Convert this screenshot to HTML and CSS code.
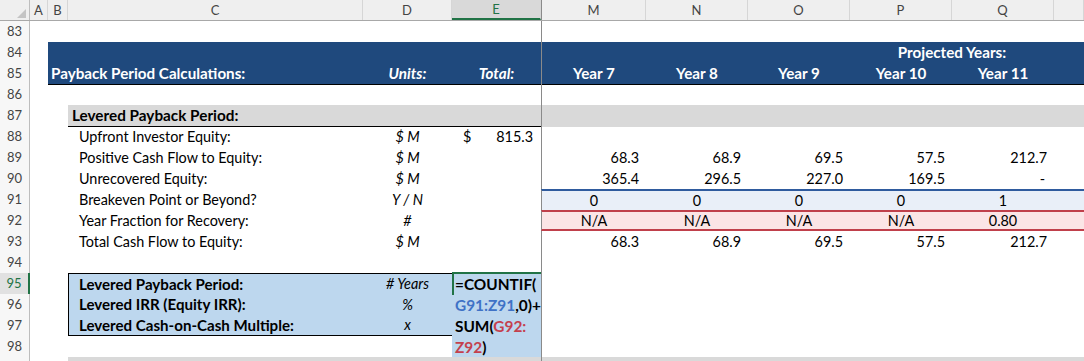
FILE: index.html
```html
<!DOCTYPE html>
<html>
<head>
<meta charset="utf-8">
<link rel="stylesheet" href="styles.css">
</head>
<body>
<div class="sheet">
  <div class="row hdr">
    <div class="ch corner"><span class="tri"></span></div>
    <div class="ch">A</div><div class="ch">B</div><div class="ch">C</div><div class="ch">D</div><div class="ch sel">E</div>
    <div class="ch fz">M</div><div class="ch">N</div><div class="ch">O</div><div class="ch">P</div><div class="ch">Q</div><div class="ch"></div>
  </div>

  <div class="row"><div class="rn">83</div><div class="c sp5"></div><div class="c fz sp6"></div></div>

  <div class="row">
    <div class="rn">84</div><div class="c"></div>
    <div class="c navy sp4"></div>
    <div class="c navy wl fz sp3"></div>
    <div class="c navy wl sp2 hd">Projected Years:</div>
    <div class="c navy wl"></div>
  </div>

  <div class="row">
    <div class="rn">85</div><div class="c"></div>
    <div class="c navy bb sp2 ttl">Payback Period Calculations:</div>
    <div class="c navy bb hd it">Units:</div>
    <div class="c navy bb hd it">Total:</div>
    <div class="c navy bb hd fz">Year 7</div>
    <div class="c navy bb hd">Year 8</div>
    <div class="c navy bb hd">Year 9</div>
    <div class="c navy bb hd">Year 10</div>
    <div class="c navy bb hd">Year 11</div>
    <div class="c navy bb"></div>
  </div>

  <div class="row"><div class="rn">86</div><div class="c sp5"></div><div class="c fz sp6"></div></div>

  <div class="row">
    <div class="rn">87</div><div class="c sp2"></div>
    <div class="c gray bb sec">Levered Payback Period:</div>
    <div class="c gray bb"></div>
    <div class="c gray bb"></div>
    <div class="c gray fz sp6"></div>
  </div>

  <div class="row">
    <div class="rn">88</div><div class="c sp2"></div>
    <div class="c lab">Upfront Investor Equity:</div>
    <div class="c unit">$ M</div>
    <div class="c acc"><span>$</span><span>815.3</span></div>
    <div class="c fz sp6"></div>
  </div>

  <div class="row">
    <div class="rn">89</div><div class="c sp2"></div>
    <div class="c lab">Positive Cash Flow to Equity:</div>
    <div class="c unit">$ M</div>
    <div class="c"></div>
    <div class="c num fz">68.3</div><div class="c num">68.9</div><div class="c num">69.5</div><div class="c num">57.5</div><div class="c num">212.7</div><div class="c"></div>
  </div>

  <div class="row">
    <div class="rn">90</div><div class="c sp2"></div>
    <div class="c lab">Unrecovered Equity:</div>
    <div class="c unit">$ M</div>
    <div class="c"></div>
    <div class="c num fz">365.4</div><div class="c num">296.5</div><div class="c num">227.0</div><div class="c num">169.5</div><div class="c num dash">-</div><div class="c"></div>
  </div>

  <div class="row">
    <div class="rn">91</div><div class="c sp2"></div>
    <div class="c lab">Breakeven Point or Beyond?</div>
    <div class="c unit">Y / N</div>
    <div class="c"></div>
    <div class="c brk mid fz">0</div><div class="c brk mid">0</div><div class="c brk mid">0</div><div class="c brk mid">0</div><div class="c brk mid">1</div><div class="c brk"></div>
  </div>

  <div class="row">
    <div class="rn">92</div><div class="c sp2"></div>
    <div class="c lab">Year Fraction for Recovery:</div>
    <div class="c unit">#</div>
    <div class="c"></div>
    <div class="c yfr mid fz">N/A</div><div class="c yfr mid">N/A</div><div class="c yfr mid">N/A</div><div class="c yfr mid">N/A</div><div class="c yfr mid">0.80</div><div class="c yfr"></div>
  </div>

  <div class="row">
    <div class="rn">93</div><div class="c sp2"></div>
    <div class="c lab">Total Cash Flow to Equity:</div>
    <div class="c unit">$ M</div>
    <div class="c"></div>
    <div class="c num fz">68.3</div><div class="c num">68.9</div><div class="c num">69.5</div><div class="c num">57.5</div><div class="c num">212.7</div><div class="c"></div>
  </div>

  <div class="row"><div class="rn">94</div><div class="c sp5"></div><div class="c fz sp6"></div></div>

  <div class="row">
    <div class="rn rsel">95</div><div class="c sp2"></div>
    <div class="c bx bxl bxt lab b">Levered Payback Period:</div>
    <div class="c bx bxt unit">#&nbsp;Years</div>
    <div class="c ecell">
      <div class="editor">
        <div>=COUNTIF(</div>
        <div><span class="rb">G91:Z91</span>,0)+</div>
        <div>SUM(<span class="rr">G92:</span></div>
        <div><span class="rr">Z92</span>)</div>
      </div>
    </div>
    <div class="c fz sp6"></div>
  </div>

  <div class="row">
    <div class="rn">96</div><div class="c sp2"></div>
    <div class="c bx bxl lab b">Levered IRR (Equity IRR):</div>
    <div class="c bx unit">%</div>
    <div class="c"></div>
    <div class="c fz sp6"></div>
  </div>

  <div class="row">
    <div class="rn">97</div><div class="c sp2"></div>
    <div class="c bx bxl bxb lab b">Levered Cash-on-Cash Multiple:</div>
    <div class="c bx bxb unit">x</div>
    <div class="c"></div>
    <div class="c fz sp6"></div>
  </div>

  <div class="row"><div class="rn">98</div><div class="c sp5"></div><div class="c fz sp6"></div></div>

  <div class="row">
    <div class="rn"></div><div class="c sp2"></div>
    <div class="c gray sp3"></div>
    <div class="c gray fz sp6"></div>
  </div>
</div>
</body>
</html>
```
FILE: styles.css
```css
:root {
  --cols: 30px 18px 20px 295px 89px 89px 105px 102px 102px 102px 102px 1fr;
  --navy: #1f497d;
  --green: #217346;
}
html, body {
  margin: 0;
  padding: 0;
  background: #fff;
}
body {
  font-family: "Lato", "Open Sans", sans-serif;
  font-size: 14.4px;
  color: #000;
  overflow: hidden;
}
.sheet {
  width: 1084px;
  height: 361px;
  overflow: hidden;
}
.row {
  display: grid;
  grid-template-columns: var(--cols);
  height: 21px;
}
.c {
  box-sizing: border-box;
  white-space: nowrap;
  line-height: 21px;
  min-width: 0;
}
.sp2 { grid-column: span 2; }
.sp3 { grid-column: span 3; }
.sp4 { grid-column: span 4; }
.sp5 { grid-column: span 5; }
.sp6 { grid-column: span 6; }

/* headers */
.hdr {
  box-sizing: border-box;
  border-bottom: 1px solid #a8a8a8;
  background: #efefef;
}
.ch {
  box-sizing: border-box;
  text-align: center;
  color: #444;
  font-size: 13px;
  line-height: 20px;
  border-right: 1px solid #d6d6d6;
  min-width: 0;
}
.ch.sel {
  background: #d9d9d9;
  color: var(--green);
  border-bottom: 2px solid var(--green);
  line-height: 18px;
}
.corner {
  display: flex;
  align-items: flex-end;
  justify-content: flex-end;
  padding: 0 3px 2px 0;
  border-right: 1px solid #bdbdbd;
}
.tri {
  width: 0;
  height: 0;
  border-left: 9px solid transparent;
  border-bottom: 9px solid #c4c4c4;
}
.rn {
  box-sizing: border-box;
  text-align: center;
  color: #444;
  font-size: 13px;
  line-height: 21px;
  background: #f7f7f7;
  border-right: 1px solid #bdbdbd;
}
.rn.rsel {
  background: #e1e1e1;
  color: var(--green);
  border-right: 2px solid var(--green);
}
.fz { border-left: 1px solid #8a8a8a; }

/* header band */
.navy {
  background: var(--navy);
  color: #fff;
  font-weight: 700;
  font-size: 15.2px;
}
.wl { border-bottom: 1px solid #fff; }
.bb { border-bottom: 1px solid #000; }
.hd { text-align: center; }
.it { font-style: italic; }
.ttl { padding-left: 3px; }

/* section */
.gray { background: #d9d9d9; }
.sec {
  font-weight: 700;
  font-size: 15.3px;
  padding-left: 4px;
}
.lab { padding-left: 11px; }
.b { font-weight: 700; font-size: 15.1px; }
.unit {
  text-align: center;
  font-style: italic;
}
.acc {
  display: flex;
  justify-content: space-between;
  padding: 0 8px 0 11px;
}
.num {
  text-align: right;
  padding-right: 7px;
}
.num.dash { padding-right: 9px; }
.mid { text-align: center; }
.brk {
  background: #e9eff8;
  border-top: 2px solid #2f5b9e;
  line-height: 19px;
}
.yfr {
  background: #fbe5e6;
  border-top: 2px solid #c0404b;
  border-bottom: 2px solid #c0404b;
  line-height: 17px;
}

/* summary box */
.bx { background: #bdd7ee; }
.bxl { border-left: 1px solid #000; padding-left: 10px; }
.bxt { border-top: 1px solid #000; line-height: 20px; }
.bxb { border-bottom: 1px solid #000; line-height: 20px; }

/* in-cell editor */
.ecell { position: relative; }
.editor {
  position: absolute;
  top: -1px;
  left: 0;
  width: 89px;
  height: 85px;
  box-sizing: border-box;
  background: #bdd7ee;
  border-top: 2px solid var(--green);
  padding-left: 3px;
  font-weight: 700;
  font-size: 15.4px;
  line-height: 21px;
  z-index: 2;
  white-space: nowrap;
}
.editor::before {
  content: "";
  position: absolute;
  left: 0;
  top: -2px;
  width: 2px;
  height: 23px;
  background: var(--green);
}
.rb { color: #3f72c6; }
.rr { color: #c4404d; }
```
